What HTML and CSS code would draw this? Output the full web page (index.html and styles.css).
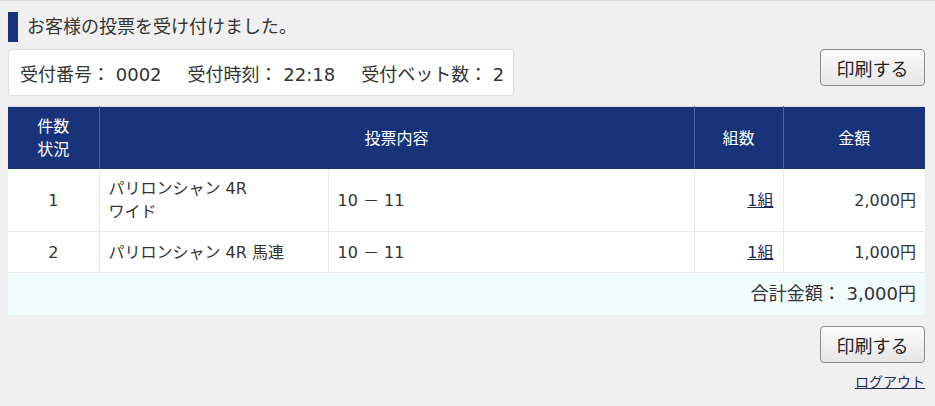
FILE: index.html
```html
<!DOCTYPE html>
<html lang="ja">
<head>
<meta charset="utf-8">
<title>投票受付</title>
<link rel="stylesheet" href="styles.css">
</head>
<body>
<div class="page">
  <h1 class="heading">お客様の投票を受け付けました。</h1>
  <div class="info-row">
    <div class="info-box">
      <span class="item">受付番号： 0002</span>
      <span class="item">受付時刻： 22:18</span>
      <span class="item">受付ベット数： 2</span>
    </div>
    <button class="print-btn" type="button">印刷する</button>
  </div>
  <table class="bets">
    <colgroup>
      <col class="c1"><col class="c2"><col class="c3"><col class="c4"><col class="c5">
    </colgroup>
    <thead>
      <tr>
        <th>件数<br>状況</th>
        <th colspan="2">投票内容</th>
        <th>組数</th>
        <th>金額</th>
      </tr>
    </thead>
    <tbody>
      <tr>
        <td class="center">1</td>
        <td>パリロンシャン 4R<br>ワイド</td>
        <td>10 <span class="dash">－</span> 11</td>
        <td class="right"><a href="#" class="link">1組</a></td>
        <td class="right">2,000円</td>
      </tr>
      <tr>
        <td class="center">2</td>
        <td>パリロンシャン 4R 馬連</td>
        <td>10 <span class="dash">－</span> 11</td>
        <td class="right"><a href="#" class="link">1組</a></td>
        <td class="right">1,000円</td>
      </tr>
      <tr class="total">
        <td colspan="5">合計金額： 3,000円</td>
      </tr>
    </tbody>
  </table>
  <div class="bottom">
    <button class="print-btn" type="button">印刷する</button>
    <a href="#" class="logout">ログアウト</a>
  </div>
</div>
</body>
</html>
```

FILE: styles.css
```css
* { box-sizing: border-box; }
html, body {
  margin: 0;
  padding: 0;
  background: #f0f0f0;
}
body {
  font-family: "DejaVu Sans", "Noto Sans CJK JP", sans-serif;
  color: #333;
  border-top: 1px solid #d9d9d9;
}
.page {
  padding: 0 10px 0 8px;
}
.heading {
  margin: 11px 0 0 0;
  height: 30px;
  border-left: 10px solid #18337a;
  padding-left: 9px;
  font-size: 18px;
  font-weight: normal;
  line-height: 30px;
  color: #333;
}
.info-row {
  margin-top: 7px;
  display: flex;
  justify-content: space-between;
  align-items: flex-start;
}
.info-box {
  width: 506px;
  height: 47px;
  background: #fff;
  border: 1px solid #dcdcdc;
  border-radius: 4px;
  padding: 0 11px;
  display: flex;
  align-items: center;
  gap: 26px;
  font-size: 18px;
  white-space: nowrap;
}
.print-btn {
  width: 105px;
  height: 37px;
  border: 1px solid #8a8a8a;
  border-radius: 4px;
  background: linear-gradient(#fbfbfb, #e6e6e6);
  font-family: inherit;
  font-size: 18px;
  color: #222;
  padding: 0;
  cursor: pointer;
}
.bets {
  margin-top: 10px;
  width: 100%;
  border-collapse: collapse;
  table-layout: fixed;
  font-size: 16px;
  line-height: 23px;
  border-top: 1px solid #dcdcdc;
}
.c1 { width: 91px; }
.c2 { width: 229px; }
.c3 { width: 366px; }
.c4 { width: 89px; }
.c5 { width: 142px; }
.bets th {
  background: #18337a;
  color: #fff;
  font-weight: normal;
  padding: 8px 4px;
  border-left: 1px solid #4c64a2;
  text-align: center;
}
.bets th:first-child { border-left: none; }
.bets td {
  background: #fff;
  padding: 8px 9px;
  border-left: 1px solid #e8e8e8;
  border-bottom: 1px solid #e8e8e8;
  vertical-align: middle;
}
.bets td:first-child { border-left: none; }
.center { text-align: center; }
.right { text-align: right; }
.dash { font-family: "Noto Sans CJK JP", sans-serif; }
.link {
  color: #1c2a5c;
  text-decoration: underline;
}
.bets tr.total td {
  background: #f1fcfd;
  text-align: right;
  font-size: 18px;
  line-height: 26px;
  border-bottom: none;
  padding: 8px 9px 8px;
}
.bottom {
  margin-top: 11px;
  display: flex;
  flex-direction: column;
  align-items: flex-end;
}
.logout {
  margin-top: 9px;
  font-size: 14px;
  line-height: 20px;
  color: #1c2a5c;
  text-decoration: underline;
}
```
